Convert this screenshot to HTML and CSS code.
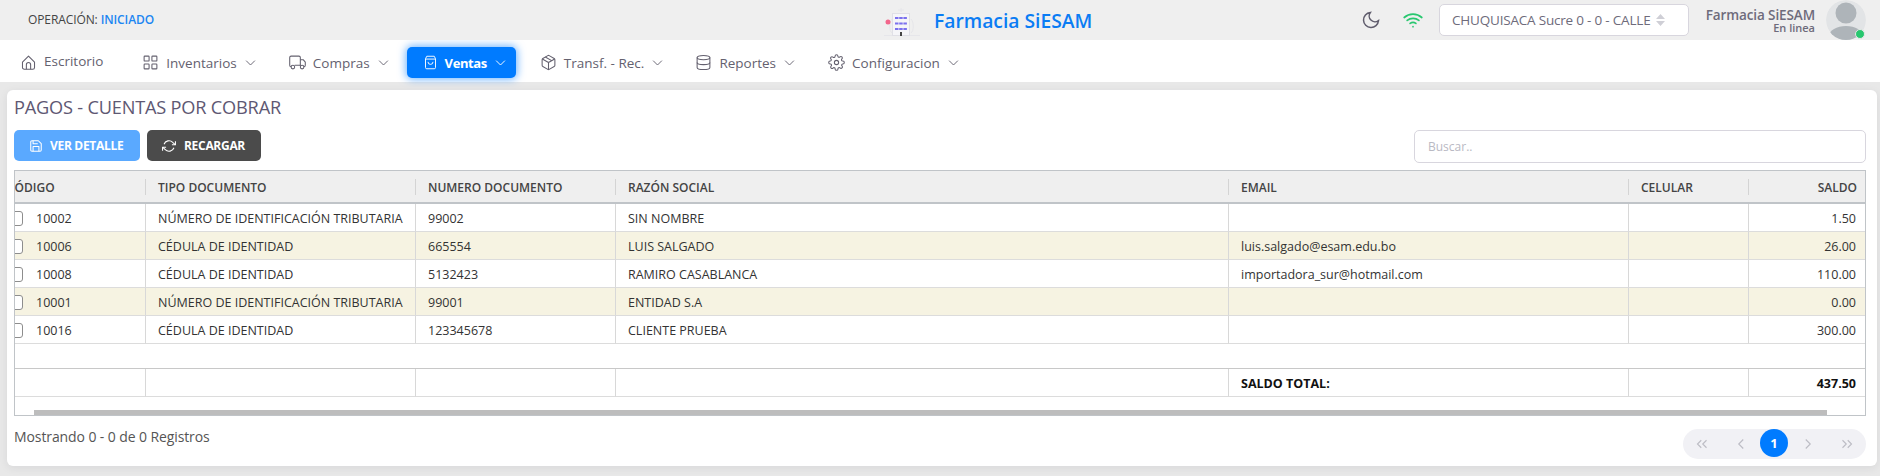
FILE: index.html
```html
<!DOCTYPE html>
<html lang="es">
<head>
<meta charset="utf-8">
<title>Farmacia SiESAM</title>
<link rel="stylesheet" href="styles.css">
</head>
<body>
<header class="topbar">
  <div class="op">OPERACIÓN: <span class="op-state">INICIADO</span></div>
  <div class="brand">
    <svg class="logo" width="36" height="36" viewBox="0 0 36 36">
      <g fill="none" stroke="#e6e6ea" stroke-width="1"><path d="M0 33.500h36"/><path d="M8 31c-3-2-3-11 0-14M27 31c3-2 3-11 0-14"/><path d="M17 10V6M14 8h6"/></g>
      <rect x="8.500" y="11.500" width="17" height="22" fill="#f5f5f8" stroke="#e0e0e6"/>
      <g fill="#7b70ee"><rect x="11" y="15" width="3.500" height="2"/><rect x="15.200" y="15" width="3.500" height="2"/><rect x="19.400" y="15" width="3.500" height="2"/><rect x="11" y="20.500" width="3.500" height="2"/><rect x="15.200" y="20.500" width="3.500" height="2"/><rect x="19.400" y="20.500" width="3.500" height="2"/><rect x="11" y="26" width="3.500" height="2"/><rect x="15.200" y="26" width="3.500" height="2"/><rect x="19.400" y="26" width="3.500" height="2"/></g>
      <rect x="16" y="30" width="2" height="4" fill="#444"/>
      <circle cx="4" cy="20" r="2.500" fill="#f2668b"/>
    </svg>
    <span class="brand-name">Farmacia SiESAM</span>
  </div>
  <div class="top-right">
    <svg class="moon" width="20" height="20" viewBox="0 0 24 24"><path d="M21 12.79A9 9 0 1 1 11.21 3 7 7 0 0 0 21 12.79z"/></svg>
    <svg class="wifi" width="20" height="20" viewBox="0 0 24 24"><path d="M5 12.55a11 11 0 0 1 14.08 0M1.42 9a16 16 0 0 1 21.16 0M8.53 16.11a6 6 0 0 1 6.95 0M12 20h.01"/></svg>
    <div class="select"><span>CHUQUISACA Sucre 0 - 0 - CALLE</span><svg class="sort" width="9" height="12" viewBox="0 0 9 12"><path d="M4.500 0 9 5H0zM0 7h9l-4.500 5z"/></svg></div>
    <div class="user"><div class="user-name">Farmacia SiESAM</div><div class="user-state">En linea</div></div>
    <div class="avatar">
      <svg width="40" height="40" viewBox="0 0 40 40"><circle cx="20" cy="20" r="20" fill="#e2e4e6"/><ellipse cx="20" cy="13" rx="10.500" ry="10.500" fill="#aeb4b9"/><ellipse cx="20" cy="36" rx="17" ry="10" fill="#aeb4b9"/></svg>
      <span class="dot"></span>
    </div>
  </div>
</header>

<nav class="nav">
  <a class="item first">
    <svg class="ic" viewBox="0 0 24 24"><path d="M3.500 11.500 12 3l8.500 8.500V19a2.500 2.500 0 0 1-2.500 2.500H6A2.500 2.500 0 0 1 3.500 19z"/><path d="M9 21.500V15a3 3 0 0 1 6 0v6.500"/></svg>
    <span class="up">Escritorio</span>
  </a>
  <a class="item">
    <svg class="ic" viewBox="0 0 24 24"><rect x="3" y="3" width="7" height="7" rx="1"/><rect x="14" y="3" width="7" height="7" rx="1"/><rect x="14" y="14" width="7" height="7" rx="1"/><rect x="3" y="14" width="7" height="7" rx="1"/></svg>
    <span>Inventarios</span>
    <svg class="chev" viewBox="0 0 24 24"><path d="m5 9 7 7 7-7"/></svg>
  </a>
  <a class="item">
    <svg class="ic" viewBox="0 0 24 24"><path d="M3 18a2 2 0 0 1-2-2V5a2 2 0 0 1 2-2h11a2 2 0 0 1 2 2v11H8"/><path d="M16 8h4l3 3.500V16a2 2 0 0 1-2 2"/><path d="M16 16v1"/><circle cx="5.500" cy="18.500" r="2.500"/><circle cx="18.500" cy="18.500" r="2.500"/></svg>
    <span>Compras</span>
    <svg class="chev" viewBox="0 0 24 24"><path d="m5 9 7 7 7-7"/></svg>
  </a>
  <a class="item active">
    <svg class="ic" viewBox="0 0 24 24"><path d="M6 2h12l2 4v14a2 2 0 0 1-2 2H6a2 2 0 0 1-2-2V6z"/><path d="M4 6.500h16"/><path d="M16 11a4 4 0 0 1-8 0"/></svg>
    <span>Ventas</span>
    <svg class="chev" viewBox="0 0 24 24"><path d="m5 9 7 7 7-7"/></svg>
  </a>
  <a class="item">
    <svg class="ic" viewBox="0 0 24 24"><path d="M21 16V8a2 2 0 0 0-1-1.730l-7-4a2 2 0 0 0-2 0l-7 4A2 2 0 0 0 3 8v8a2 2 0 0 0 1 1.730l7 4a2 2 0 0 0 2 0l7-4A2 2 0 0 0 21 16z"/><path d="m7.500 4.200 9 5.200M3.300 7 12 12l8.700-5M12 22V12"/></svg>
    <span>Transf. - Rec.</span>
    <svg class="chev" viewBox="0 0 24 24"><path d="m5 9 7 7 7-7"/></svg>
  </a>
  <a class="item tight">
    <svg class="ic" viewBox="0 0 24 24"><ellipse cx="12" cy="5" rx="9" ry="3"/><path d="M21 12c0 1.660-4 3-9 3s-9-1.340-9-3"/><path d="M3 5v14c0 1.660 4 3 9 3s9-1.340 9-3V5"/></svg>
    <span>Reportes</span>
    <svg class="chev" viewBox="0 0 24 24"><path d="m5 9 7 7 7-7"/></svg>
  </a>
  <a class="item">
    <svg class="ic" viewBox="0 0 24 24"><circle cx="12" cy="12" r="3"/><path d="M19.400 15a1.650 1.650 0 0 0 .33 1.820l.06.06a2 2 0 1 1-2.830 2.830l-.06-.06a1.650 1.650 0 0 0-2.820 1.170V21a2 2 0 1 1-4 0v-.09A1.650 1.650 0 0 0 7.260 19.740l-.06.06a2 2 0 1 1-2.830-2.830l.06-.06A1.650 1.650 0 0 0 3.260 14H3a2 2 0 1 1 0-4h.09A1.650 1.650 0 0 0 4.260 7.260l-.06-.06a2 2 0 1 1 2.830-2.830l.06.06A1.650 1.650 0 0 0 10 3.260V3a2 2 0 1 1 4 0v.09a1.650 1.650 0 0 0 2.740 1.170l.06-.06a2 2 0 1 1 2.830 2.830l-.06.06A1.650 1.650 0 0 0 20.740 10H21a2 2 0 1 1 0 4h-.09a1.650 1.650 0 0 0-1.510 1z"/></svg>
    <span>Configuracion</span>
    <svg class="chev" viewBox="0 0 24 24"><path d="m5 9 7 7 7-7"/></svg>
  </a>
</nav>

<main class="card">
  <h1 class="title">PAGOS - CUENTAS POR COBRAR</h1>
  <div class="toolbar">
    <button class="btn btn-blue">
      <svg class="btn-ic" viewBox="0 0 24 24"><path d="M19 21H5a2 2 0 0 1-2-2V5a2 2 0 0 1 2-2h11l5 5v11a2 2 0 0 1-2 2z"/><path d="M17 21v-8H7v8M7 3v5h8"/></svg>
      VER DETALLE
    </button>
    <button class="btn btn-dark">
      <svg class="btn-ic" viewBox="0 0 24 24"><path d="M23 4v6h-6M1 20v-6h6"/><path d="M3.510 9a9 9 0 0 1 14.850-3.360L23 10M1 14l4.640 4.360A9 9 0 0 0 20.490 15"/></svg>
      RECARGAR
    </button>
    <div class="search">Buscar..</div>
  </div>
  <div class="grid-wrap">
    <table class="grid">
      <colgroup>
        <col class="c1"><col class="c2"><col class="c3"><col class="c4"><col class="c5"><col class="c6"><col class="c7">
      </colgroup>
      <thead>
        <tr>
          <th><span class="th-in">CÓDIGO</span></th>
          <th><span class="th-in">TIPO DOCUMENTO</span></th>
          <th><span class="th-in">NUMERO DOCUMENTO</span></th>
          <th><span class="th-in">RAZÓN SOCIAL</span></th>
          <th><span class="th-in">EMAIL</span></th>
          <th><span class="th-in">CELULAR</span></th>
          <th class="num"><span class="th-in">SALDO</span></th>
        </tr>
      </thead>
      <tbody>
        <tr><td><span class="cb"></span>10002</td><td>NÚMERO DE IDENTIFICACIÓN TRIBUTARIA</td><td>99002</td><td>SIN NOMBRE</td><td></td><td></td><td class="num">1.50</td></tr>
        <tr class="alt"><td><span class="cb"></span>10006</td><td>CÉDULA DE IDENTIDAD</td><td>665554</td><td>LUIS SALGADO</td><td>luis.salgado@esam.edu.bo</td><td></td><td class="num">26.00</td></tr>
        <tr><td><span class="cb"></span>10008</td><td>CÉDULA DE IDENTIDAD</td><td>5132423</td><td>RAMIRO CASABLANCA</td><td>importadora_sur@hotmail.com</td><td></td><td class="num">110.00</td></tr>
        <tr class="alt"><td><span class="cb"></span>10001</td><td>NÚMERO DE IDENTIFICACIÓN TRIBUTARIA</td><td>99001</td><td>ENTIDAD S.A</td><td></td><td></td><td class="num">0.00</td></tr>
        <tr><td><span class="cb"></span>10016</td><td>CÉDULA DE IDENTIDAD</td><td>123345678</td><td>CLIENTE PRUEBA</td><td></td><td></td><td class="num">300.00</td></tr>
        <tr class="empty"><td colspan="7"></td></tr>
      </tbody>
      <tfoot>
        <tr><td></td><td></td><td></td><td></td><td>SALDO TOTAL:</td><td></td><td class="num">437.50</td></tr>
      </tfoot>
    </table>
    <div class="hscroll"><div class="thumb"></div></div>
  </div>
  <div class="foot">
    <div class="count">Mostrando 0 - 0 de 0 Registros</div>
    <div class="pager">
      <svg class="pg" viewBox="0 0 24 24"><path d="m11 17-5-5 5-5M18 17l-5-5 5-5"/></svg>
      <svg class="pg pg-far" viewBox="0 0 24 24"><path d="m15 18-6-6 6-6"/></svg>
      <span class="pg-on">1</span>
      <svg class="pg pg-near" viewBox="0 0 24 24"><path d="m9 18 6-6-6-6"/></svg>
      <svg class="pg pg-far" viewBox="0 0 24 24"><path d="m13 17 5-5-5-5M6 17l5-5-5-5"/></svg>
    </div>
  </div>
</main>
</body>
</html>
```
FILE: styles.css
```css
* { box-sizing: border-box; }
html, body { margin: 0; height: 100%; }
body {
  background: #e8e8e8;
  font-family: "Open Sans", "Noto Sans", sans-serif;
  color: #333;
  overflow: hidden;
}
svg { display: block; flex: none; }

.topbar {
  height: 40px;
  background: #efefef;
  display: flex;
  align-items: center;
  position: relative;
  padding-left: 28px;
}
.op { font-size: 12px; color: #444; letter-spacing: -.1px; margin-top: -2px; }
.op-state { color: #1c86f2; font-weight: 600; }
.brand {
  position: absolute;
  left: 884px;
  top: 0;
  height: 40px;
  display: flex;
  align-items: center;
  gap: 14px;
}
.brand-name { font-size: 19.300px; font-weight: 600; color: #0a7cf4; margin-top: 1px; }
.top-right {
  margin-left: auto;
  display: flex;
  align-items: center;
  padding-right: 14px;
}
.moon { fill: none; stroke: #5f5c6c; stroke-width: 1.800; margin-right: 22px; }
.wifi { fill: none; stroke: #28c76f; stroke-width: 2; stroke-linecap: round; margin-right: 16px; }
.select {
  width: 250px;
  height: 32px;
  background: #fff;
  border: 1px solid #d8d6de;
  border-radius: 5px;
  display: flex;
  align-items: center;
  padding-left: 12px;
  font-size: 13.500px;
  color: #6e6b7b;
  letter-spacing: -.2px;
  white-space: nowrap;
}
.sort { margin-left: 6px; fill: #cfcfd6; }
.user { width: 126px; padding-top: 1px; text-align: right; font-size: 13.500px; line-height: 13px; color: #6e6b7b; }
.user-name { font-weight: 600; letter-spacing: -.1px; }
.user-state { font-size: 11px; font-weight: 600; line-height: 11px; }
.avatar { position: relative; width: 40px; height: 40px; margin-left: 11px; overflow: visible; }
.avatar svg { border-radius: 50%; }
.dot {
  position: absolute;
  right: 1px;
  bottom: 1px;
  width: 10px;
  height: 10px;
  border-radius: 50%;
  background: #28c76f;
  border: 1px solid #e8e8e8;
}

.nav {
  height: 42px;
  background: #fff;
  display: flex;
  align-items: center;
  padding: 3px 0 0 6px;
  gap: 7px;
}
.item {
  height: 31px;
  display: flex;
  align-items: center;
  padding: 0 8px 0 16px;
  font-size: 13.500px;
  color: #64616f;
  border-radius: 5px;
  white-space: nowrap;
}
.item.first { padding: 0 16px 0 14px; }
.item.tight { margin-left: -1px; }
.up { margin-bottom: 4px; }
.ic { width: 17px; height: 17px; fill: none; stroke: currentColor; stroke-width: 1.500; stroke-linejoin: round; margin-right: 7px; }
.chev { width: 15px; height: 15px; fill: none; stroke: currentColor; stroke-width: 1.500; margin-left: 6px; }
.active {
  background: #007bff;
  color: #fff;
  font-size: 13px;
  font-weight: 700;
  letter-spacing: -.4px;
  margin: 0 1px 0 1px;
  box-shadow: 0 0 8px 1px rgba(0, 123, 255, .6);
}
.active .ic { width: 15px; height: 17px; }

.card {
  margin: 8px 3px 0 7px;
  height: 376px;
  background: #fff;
  border-radius: 6px;
  padding: 6px 11px 0 7px;
  box-shadow: 0 2px 8px rgba(34, 41, 47, .08);
}
.title { margin: 0; font-size: 18.200px; line-height: 22px; font-weight: 400; color: #5e5873; letter-spacing: -.2px; }
.toolbar { display: flex; align-items: flex-start; gap: 7px; margin-top: 12px; }
.btn {
  height: 31px;
  border: 0;
  border-radius: 5px;
  display: flex;
  align-items: center;
  gap: 8px;
  padding: 0 0 0 15px;
  font: 700 12px "Open Sans", sans-serif;
  letter-spacing: -.3px;
  color: #fff;
}
.btn-blue { width: 126px; background: #5aa9ff; gap: 7px; }
.btn-dark { width: 114px; background: #4b4b4b; }
.btn-ic { width: 14px; height: 14px; fill: none; stroke: #fff; stroke-width: 1.800; stroke-linejoin: round; }
.search {
  margin-left: auto;
  width: 452px;
  height: 33px;
  border: 1px solid #d8d6de;
  border-radius: 5px;
  display: flex;
  align-items: center;
  padding-left: 13px;
  font-size: 12px;
  color: #b9b9c3;
}

.grid-wrap {
  margin-top: 7px;
  height: 246px;
  border: 1px solid #c0c4c8;
  overflow: hidden;
  position: relative;
}
.grid {
  table-layout: fixed;
  border-collapse: separate;
  border-spacing: 0;
  width: 1870px;
  margin-left: -20px;
  font-size: 12.500px;
  color: #333;
}
.c1 { width: 151px; }
.c2 { width: 270px; }
.c3 { width: 200px; }
.c4 { width: 613px; }
.c5 { width: 400px; }
.c6 { width: 120px; }
.c7 { width: 116px; }
.grid th {
  height: 33px;
  padding: 0;
  background: #efefef;
  border-bottom: 2px solid #c0c4c8;
  text-align: left;
  font-size: 12px;
  font-weight: 600;
  color: #444;
}
.th-in { display: block; height: 16px; line-height: 18px; padding: 0 12px; border-right: 1px solid #d4d4d4; }
th:last-child .th-in { border-right: 0; padding-right: 8px; }
.grid td {
  height: 28px;
  padding: 1px 12px 0;
  border-bottom: 1px solid #dcdcdc;
  border-right: 1px solid #d8d8d8;
  white-space: nowrap;
  overflow: hidden;
}
.grid td:last-child { border-right: 0; padding-right: 9px; }
.grid .num { text-align: right; }
.alt td { background: #f6f3e2; }
.grid .empty td { height: 25px; border-right: 0; border-bottom-color: #c8c8c8; }
tfoot td { font-weight: 700; color: #111; }
.cb {
  display: inline-block;
  width: 15px;
  height: 15px;
  border: 1px solid #8d8d8d;
  border-radius: 3px;
  background: #fff;
  vertical-align: -3px;
  margin: 0 13px 0 1px;
}
.hscroll { position: absolute; left: 0; right: 0; bottom: 0; height: 5px; }
.thumb { margin-left: 19px; width: 1793px; height: 5px; background: #bdbdbd; }

.foot { display: flex; align-items: flex-start; justify-content: space-between; margin-top: 13px; }
.count { font-size: 14px; line-height: 18px; color: #555; letter-spacing: -.1px; margin-top: -1px; }
.pager {
  width: 183px;
  height: 30px;
  border-radius: 15px;
  background: #f1f1f5;
  display: flex;
  align-items: flex-start;
  padding: 0 10px;
}
.pg { width: 18px; height: 18px; margin-top: 6px; fill: none; stroke: #bcbcc4; stroke-width: 1.500; }
.pg-far { margin-left: 21px; }
.pg-near { margin-left: 11px; }
.pg-on {
  width: 28px;
  height: 28px;
  margin-left: 10px;
  border-radius: 50%;
  background: #007bff;
  color: #fff;
  font-size: 13px;
  font-weight: 700;
  display: flex;
  align-items: center;
  justify-content: center;
}
```
